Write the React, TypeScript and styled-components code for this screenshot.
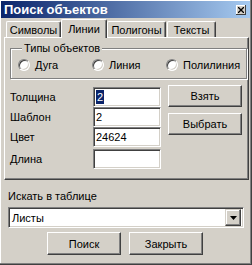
import styled, { createGlobalStyle } from 'styled-components'

const Global = createGlobalStyle`
	html, body {
		margin: 0;
		padding: 0;
		background: #d4d0c8;
	}
	* {
		box-sizing: border-box;
	}
`

const face = '#d4d0c8'
const shadow = '#808080'
const dark = '#404040'

const Window = styled.div`
	width: 252px;
	height: 265px;
	padding: 1px 2px 2px 1px;
	background: ${face};
	font-family: "Liberation Sans", Arial, sans-serif;
	font-size: 11px;
	color: #000;
	box-shadow: inset -1px -1px ${dark}, inset -2px -2px ${shadow}, inset 1px 1px #fff;
	display: flex;
	flex-direction: column;
`

const TitleBar = styled.div`
	height: 17px;
	padding: 0 3px;
	display: flex;
	align-items: center;
	justify-content: space-between;
	background: linear-gradient(to right, #0a246a, #a6caf0);
	color: #fff;
	font-weight: bold;
	font-size: 13px;
`

const CloseButton = styled.div`
	width: 10px;
	height: 10px;
	margin-right: 1px;
	background: ${face};
	box-shadow: inset -1px -1px ${dark}, inset 1px 1px #fff;
	display: flex;
	align-items: center;
	justify-content: center;
`

const Content = styled.div`
	flex: 1;
	padding: 1px 1px 0 3px;
	display: flex;
	flex-direction: column;
`

const TabRow = styled.div`
	height: 18px;
	padding-left: 2px;
	display: flex;
	align-items: flex-end;
`

const Tab = styled.div<{ $active?: boolean; $width: number; $gap?: number }>`
	position: relative;
	width: ${({ $width }) => $width}px;
	margin-left: ${({ $gap }) => $gap ?? 0}px;
	height: ${({ $active }) => ($active ? 19 : 16)}px;
	margin-bottom: ${({ $active }) => ($active ? -1 : 0)}px;
	z-index: ${({ $active }) => ($active ? 1 : 0)};
	background: ${face};
	border-top: 1px solid #fff;
	border-left: 1px solid #fff;
	border-right: 1px solid ${dark};
	border-radius: 2px 2px 0 0;
	box-shadow: inset -1px 0 ${shadow};
	display: flex;
	align-items: center;
	justify-content: center;
	padding-top: 1px;
	padding-bottom: ${({ $active }) => ($active ? 2 : 0)}px;
`

const Panel = styled.div`
	height: 143px;
	border-top: 1px solid #fff;
	border-left: 1px solid #fff;
	border-right: 1px solid ${dark};
	border-bottom: 1px solid ${dark};
	box-shadow: inset -1px -1px ${shadow};
	padding: 4px 5px 0 5px;
	display: flex;
	flex-direction: column;
`

const Group = styled.fieldset`
	margin: 0;
	width: 232px;
	padding: 3px 0 7px 7px;
	border: 1px solid ${shadow};
	box-shadow: 1px 1px 0 #fff, inset 1px 1px 0 #fff;
`

const Legend = styled.legend`
	margin-left: 4px;
	padding: 0 2px;
	line-height: 13px;
	background: ${face};
`

const RadioRow = styled.div`
	display: grid;
	grid-template-columns: 74px 74px 80px;
	height: 13px;
`

const RadioLabel = styled.label`
	display: flex;
	align-items: center;
	gap: 5px;
`

const RadioDot = styled.span`
	width: 12px;
	height: 12px;
	border-radius: 50%;
	background: #fff;
	border: 1px solid;
	border-color: ${shadow} #fff #fff ${shadow};
	box-shadow: inset 1px 1px ${dark}, inset -1px -1px ${face};
`

const Fields = styled.div`
	margin-top: 8px;
	display: flex;
	gap: 7px;
`

const FieldList = styled.div`
	display: flex;
	flex-direction: column;
`

const FieldRow = styled.div<{ $gap?: number }>`
	display: flex;
	align-items: center;
	height: 20px;
	margin-top: ${({ $gap }) => $gap ?? 0}px;
`

const FieldLabel = styled.span`
	width: 83px;
`

const Input = styled.div`
	width: 68px;
	height: 20px;
	background: #fff;
	border: 1px solid;
	border-color: ${shadow} #fff #fff ${shadow};
	box-shadow: inset 1px 1px ${dark}, inset -1px -1px ${face};
	padding: 0 2px;
	display: flex;
	align-items: center;
`

const Selected = styled.span`
	background: #0a246a;
	color: #fff;
	padding: 1px 1px;
`

const ButtonColumn = styled.div`
	margin-top: -2px;
	display: flex;
	flex-direction: column;
	gap: 6px;
`

const Button = styled.div<{ $height?: number }>`
	width: 74px;
	height: ${({ $height }) => $height ?? 22}px;
	background: ${face};
	border: 1px solid;
	border-color: #fff ${dark} ${dark} #fff;
	box-shadow: inset -1px -1px ${shadow};
	display: flex;
	align-items: center;
	justify-content: center;
`

const Bottom = styled.div`
	padding: 10px 5px 0 4px;
	display: flex;
	flex-direction: column;
`

const BottomLabel = styled.div`
	height: 17px;
	line-height: 13px;
`

const Select = styled.div`
	width: 236px;
	height: 21px;
	background: #fff;
	border: 1px solid;
	border-color: ${shadow} #fff #fff ${shadow};
	box-shadow: inset 1px 1px ${dark}, inset -1px -1px ${face};
	padding: 2px 2px 2px 3px;
	display: flex;
	align-items: center;
	justify-content: space-between;
`

const DropButton = styled.div`
	width: 16px;
	height: 17px;
	background: ${face};
	border: 1px solid;
	border-color: ${face} ${dark} ${dark} ${face};
	box-shadow: inset -1px -1px ${shadow}, inset 1px 1px #fff;
	display: flex;
	align-items: center;
	justify-content: center;
`

const Actions = styled.div`
	margin-top: 4px;
	display: flex;
	justify-content: center;
	gap: 8px;
	padding-right: 2px;
`

const radios = ['Дуга', 'Линия', 'Полилиния']

export default function App() {
	return (
		<Window>
			<Global />
			<TitleBar>
				<span>Поиск объектов</span>
				<CloseButton>
					<svg width="6" height="6" viewBox="0 0 6 6">
						<path d="M0 0L6 6M6 0L0 6" stroke="#000" strokeWidth="1.3" />
					</svg>
				</CloseButton>
			</TitleBar>
			<Content>
				<TabRow>
					<Tab $width={55}>Символы</Tab>
					<Tab $width={46} $active>Линии</Tab>
					<Tab $width={59}>Полигоны</Tab>
					<Tab $width={49} $gap={1}>Тексты</Tab>
				</TabRow>
				<Panel>
					<Group>
						<Legend>Типы объектов</Legend>
						<RadioRow>
							{radios.map(r => (
								<RadioLabel key={r}>
									<RadioDot />
									{r}
								</RadioLabel>
							))}
						</RadioRow>
					</Group>
					<Fields>
						<FieldList>
							<FieldRow>
								<FieldLabel>Толщина</FieldLabel>
								<Input><Selected>2</Selected></Input>
							</FieldRow>
							<FieldRow>
								<FieldLabel>Шаблон</FieldLabel>
								<Input>2</Input>
							</FieldRow>
							<FieldRow>
								<FieldLabel>Цвет</FieldLabel>
								<Input>24624</Input>
							</FieldRow>
							<FieldRow $gap={2}>
								<FieldLabel>Длина</FieldLabel>
								<Input />
							</FieldRow>
						</FieldList>
						<ButtonColumn>
							<Button>Взять</Button>
							<Button>Выбрать</Button>
						</ButtonColumn>
					</Fields>
				</Panel>
				<Bottom>
					<BottomLabel>Искать в таблице</BottomLabel>
					<Select>
						<span>Листы</span>
						<DropButton>
							<svg width="7" height="4" viewBox="0 0 7 4">
								<path d="M0 0H7L3.5 4Z" fill="#000" />
							</svg>
						</DropButton>
					</Select>
					<Actions>
						<Button $height={23}>Поиск</Button>
						<Button $height={23}>Закрыть</Button>
					</Actions>
				</Bottom>
			</Content>
		</Window>
	)
}
